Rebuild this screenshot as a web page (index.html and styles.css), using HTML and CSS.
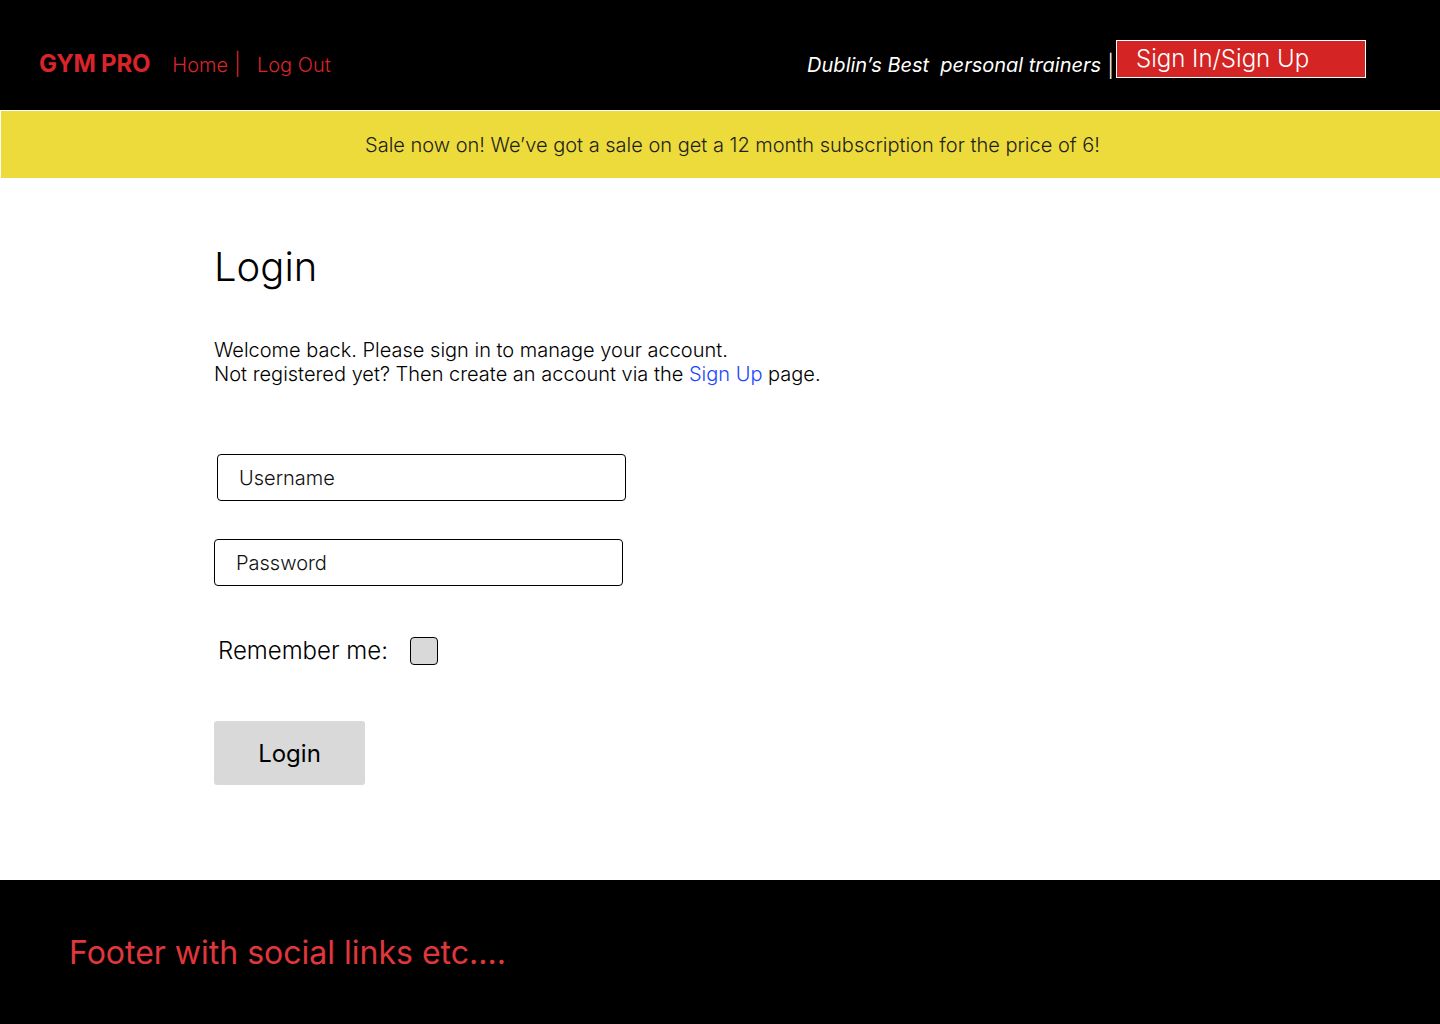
FILE: index.html
```html
<!DOCTYPE html>
<html lang="en">
<head>
<meta charset="utf-8">
<title>GYM PRO - Login</title>
<link rel="stylesheet" href="styles.css">
</head>
<body>
<header class="topbar">
  <div class="brand-group">
    <span class="brand">GYM PRO</span>
    <nav class="nav">
      <a class="nav-link" href="#">Home</a>
      <span class="nav-sep">|</span>
      <a class="nav-link" href="#">Log Out</a>
    </nav>
  </div>
  <div class="right-group">
    <span class="tagline">Dublin’s Best &nbsp;personal trainers</span>
    <span class="tag-sep">|</span>
    <a class="signin" href="#">Sign In/Sign Up</a>
  </div>
</header>
<div class="banner">
  <p class="banner-text">Sale now on! We’ve got a sale on get a 12 month subscription for the price of 6!</p>
</div>
<main class="main">
  <h1 class="title">Login</h1>
  <p class="intro">Welcome back. Please sign in to manage your account.<br>Not registered yet? Then create an account via the <a class="link" href="#">Sign Up</a> page.</p>
  <form class="form">
    <input class="field field-user" type="text" placeholder="Username">
    <input class="field field-pass" type="password" placeholder="Password">
    <label class="remember">
      <span class="remember-text">Remember me:</span>
      <span class="checkbox"></span>
    </label>
    <button class="login-btn" type="button">Login</button>
  </form>
</main>
<footer class="footer">
  <p class="footer-text">Footer with social links etc....</p>
</footer>
</body>
</html>
```
FILE: styles.css
```css
* { box-sizing: border-box; }
html, body { margin: 0; padding: 0; }
body {
  font-family: Inter, "Noto Sans", sans-serif;
  font-weight: 300;
  background: #ffffff;
  color: #000;
  width: 1440px;
}
a { text-decoration: none; }

.topbar {
  height: 110px;
  background: #000;
  display: flex;
  justify-content: space-between;
  align-items: center;
  padding: 14px 74px 0 39px;
}
.brand-group {
  display: flex;
  align-items: baseline;
  margin-top: 3px;
}
.brand {
  color: #d8242a;
  font-weight: 700;
  font-size: 24px;
  letter-spacing: -0.2px;
}
.nav {
  display: flex;
  align-items: baseline;
  margin-left: 22px;
}
.nav-link {
  color: #d8242a;
  font-size: 20px;
}
.nav-sep {
  color: #d8242a;
  font-size: 22px;
  margin: 0 16px 0 6px;
}
.right-group {
  display: flex;
  align-items: center;
}
.tagline {
  color: #fff;
  font-style: italic;
  font-weight: 400;
  font-size: 20px;
  margin-top: 6px;
}
.tag-sep {
  color: #fff;
  font-size: 22px;
  margin: 8px 2px 0 6px;
}
.signin {
  display: block;
  width: 250px;
  height: 38px;
  margin-top: -6px;
  background: #d42424;
  border: 1px solid #fff;
  color: #fff;
  font-size: 24px;
  line-height: 36px;
  padding-left: 19px;
}

.banner {
  margin: 1px 0 0 1px;
  height: 67px;
  background: #ecdb3b;
  display: flex;
  align-items: center;
  justify-content: center;
  padding-left: 24px;
}
.banner-text {
  margin: 0;
  font-size: 20px;
  color: #1e1e1e;
}

.main {
  height: 702px;
  padding: 65px 0 0 214px;
  display: flex;
  flex-direction: column;
  align-items: flex-start;
}
.title {
  margin: 0;
  font-size: 40px;
  font-weight: 300;
  line-height: 48px;
}
.intro {
  margin: 47px 0 0 0;
  font-size: 20px;
  line-height: 24px;
}
.link { color: #1a47ff; }
.form {
  display: flex;
  flex-direction: column;
  align-items: flex-start;
  margin-top: 68px;
}
.field {
  width: 409px;
  height: 47px;
  border: 1px solid #000;
  border-radius: 4px;
  padding: 0 0 0 21px;
  font-family: Inter, "Noto Sans", sans-serif;
  font-weight: 300;
  font-size: 20px;
  background: #fff;
  outline: none;
}
.field::placeholder { color: #111; opacity: 1; }
.field-user { margin-left: 3px; }
.field-pass { margin-top: 38px; }
.remember {
  display: flex;
  align-items: center;
  margin-top: 50px;
  margin-left: 4px;
}
.remember-text {
  font-size: 24px;
}
.checkbox {
  width: 28px;
  height: 28px;
  background: #d9d9d9;
  border: 1px solid #000;
  border-radius: 4px;
  margin-left: 22px;
}
.login-btn {
  margin-top: 56px;
  width: 151px;
  height: 64px;
  border: none;
  border-radius: 3px;
  background: #d9d9d9;
  font-family: Inter, "Noto Sans", sans-serif;
  font-weight: 400;
  font-size: 24px;
  color: #000;
  padding: 1px 0 0 0;
}

.footer {
  height: 144px;
  background: #000;
  display: flex;
  align-items: center;
  padding-left: 69px;
}
.footer-text {
  margin: 0;
  color: #e0373c;
  font-size: 32px;
  font-weight: 400;
}
```
